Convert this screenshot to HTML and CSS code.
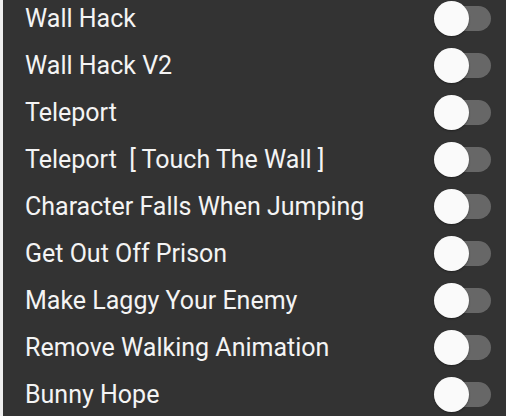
FILE: index.html
```html
<!DOCTYPE html>
<html>
<head>
<meta charset="utf-8">
<link rel="stylesheet" href="styles.css">
</head>
<body>
<div class="panel">
  <ul class="menu">
    <li class="item"><span class="label">Wall Hack</span><span class="switch"><span class="thumb"></span></span></li>
    <li class="item"><span class="label">Wall Hack V2</span><span class="switch"><span class="thumb"></span></span></li>
    <li class="item"><span class="label">Teleport</span><span class="switch"><span class="thumb"></span></span></li>
    <li class="item"><span class="label">Teleport&nbsp; [ Touch The Wall ]</span><span class="switch"><span class="thumb"></span></span></li>
    <li class="item"><span class="label">Character Falls When Jumping</span><span class="switch"><span class="thumb"></span></span></li>
    <li class="item"><span class="label">Get Out Off Prison</span><span class="switch"><span class="thumb"></span></span></li>
    <li class="item"><span class="label">Make Laggy Your Enemy</span><span class="switch"><span class="thumb"></span></span></li>
    <li class="item"><span class="label">Remove Walking Animation</span><span class="switch"><span class="thumb"></span></span></li>
    <li class="item"><span class="label">Bunny Hope</span><span class="switch"><span class="thumb"></span></span></li>
  </ul>
</div>
</body>
</html>
```
FILE: styles.css
```css
html, body {
  margin: 0;
  padding: 0;
  height: 100%;
  overflow: hidden;
}

body {
  background: #efefef;
  font-family: Roboto, "Noto Sans", sans-serif;
}

.panel {
  margin-left: 3px;
  height: 100%;
  background: #333333;
  overflow: hidden;
}

.menu {
  list-style: none;
  margin: -5px 0 0 0;
  padding: 0 15px 0 22px;
}

.item {
  height: 47px;
  display: flex;
  align-items: center;
  justify-content: space-between;
}

.label {
  color: #f4f4f4;
  font-size: 25px;
  font-weight: 400;
  white-space: nowrap;
}

.switch {
  position: relative;
  width: 57px;
  height: 25px;
  border-radius: 12.5px;
  background: #676767;
}

.thumb {
  position: absolute;
  left: 0;
  top: -5px;
  width: 35px;
  height: 35px;
  border-radius: 50%;
  background: #fafafa;
  box-shadow: 0 1px 2px rgba(0, 0, 0, 0.35);
}
```
